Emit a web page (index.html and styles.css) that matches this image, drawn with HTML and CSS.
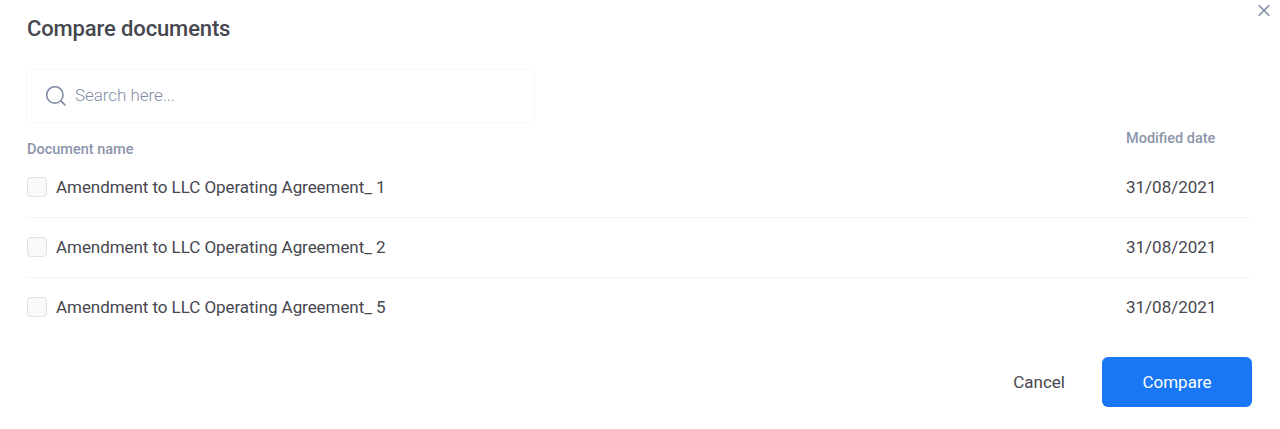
FILE: index.html
```html
<!DOCTYPE html>
<html lang="en">
<head>
  <meta charset="UTF-8">
  <title>Compare documents</title>
  <link rel="stylesheet" href="styles.css">
</head>
<body>
  <div class="modal">
    <button class="close" aria-label="Close">
      <svg width="12" height="12" viewBox="0 0 12 12"><path d="M.7.2l10.6 10.6M11.3.2L.7 10.8"/></svg>
    </button>

    <h1>Compare documents</h1>

    <label class="search">
      <svg width="20" height="20" viewBox="0 0 20 20"><circle cx="8.9" cy="8.9" r="8.2"/><path d="M14.6 14.6l4.8 4.8"/></svg>
      <input type="text" placeholder="Search here...">
    </label>

    <div class="table-head">
      <span class="name">Document name</span>
      <span class="date">Modified date</span>
    </div>

    <div class="rows">
      <div class="row">
        <label class="name"><input type="checkbox"> <span>Amendment to LLC Operating Agreement_ 1</span></label>
        <span class="date">31/08/2021</span>
      </div>
      <div class="row">
        <label class="name"><input type="checkbox"> <span>Amendment to LLC Operating Agreement_ 2</span></label>
        <span class="date">31/08/2021</span>
      </div>
      <div class="row">
        <label class="name"><input type="checkbox"> <span>Amendment to LLC Operating Agreement_ 5</span></label>
        <span class="date">31/08/2021</span>
      </div>
    </div>

    <div class="actions">
      <button class="cancel">Cancel</button>
      <button class="compare">Compare</button>
    </div>
  </div>
</body>
</html>
```
FILE: styles.css
```css
* {
  box-sizing: border-box;
}

body {
  margin: 0;
  background: #fff;
  color: #47474f;
  font-family: Roboto, sans-serif;
  font-size: 17px;
}

.modal {
  position: relative;
  height: 429px;
  padding: 14px 28px 0 27px;
}

button {
  border: none;
  background: none;
  padding: 0;
  font: inherit;
  color: inherit;
  cursor: pointer;
}

svg {
  fill: none;
  stroke: #838ea6;
  stroke-width: 1.6;
}

.close {
  position: absolute;
  top: 5px;
  right: 10px;
  width: 12px;
  height: 12px;
}

.close svg {
  display: block;
}

h1 {
  margin: 0 0 26px;
  font-size: 22px;
  line-height: 29px;
  font-weight: 500;
  letter-spacing: -0.13px;
}

.search {
  display: flex;
  align-items: center;
  width: 509px;
  height: 54px;
  margin-left: -1px;
  padding: 0 19px;
  gap: 9px;
  border: 1px solid #f8f8f9;
  border-radius: 6px;
}

.search input {
  flex: 1;
  border: none;
  outline: none;
  padding: 0 0 2px;
  font: 300 17px Roboto, sans-serif;
  letter-spacing: -0.05px;
}

.search input::placeholder {
  color: #838ea6;
}

.table-head {
  display: flex;
  height: 34px;
  font-size: 14.5px;
  line-height: 20px;
  font-weight: 500;
  color: #8b95ab;
}

.table-head .name {
  padding-top: 17px;
}

.table-head .date {
  padding-top: 6px;
}

.name {
  flex: 1;
}

.date {
  width: 126px;
}

.row {
  display: flex;
  align-items: center;
  height: 60.5px;
  border-bottom: 1px solid #f4f4f5;
}

.row:last-child {
  height: 58px;
  border-bottom: none;
}

.row .name {
  display: flex;
  align-items: center;
  gap: 9px;
  letter-spacing: -0.06px;
}

.row input {
  appearance: none;
  width: 20px;
  height: 20px;
  margin: 0;
  border: 1px solid #dfe1e6;
  border-radius: 4px;
  background: #f8f9fb;
}

.actions {
  display: flex;
  justify-content: flex-end;
  gap: 37px;
  margin-top: 21px;
}

.compare {
  width: 150px;
  height: 50px;
  border-radius: 6px;
  background: #1976f4;
  color: #fff;
}
```
